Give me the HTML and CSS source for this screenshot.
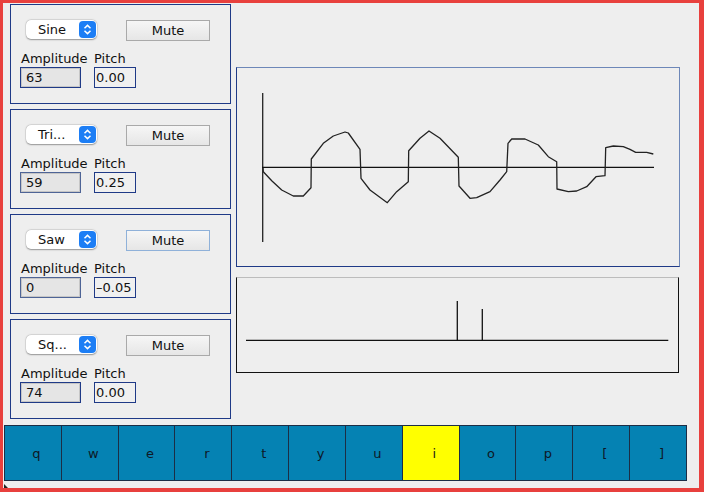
FILE: index.html
```html
<!DOCTYPE html>
<html>
<head>
<meta charset="utf-8">
<link rel="stylesheet" href="styles.css">
</head>
<body>
<div class="frame">
  <div class="main">
    <div class="voices">
      <div class="panel">
        <div class="controls">
          <div class="select"><span class="sel-text">Sine</span><svg class="stepper" width="17" height="17" viewBox="0 0 17 17"><rect rx="4" width="17" height="17" fill="#1d7ef5"/><path d="M5.5 7.2 L8.5 4.4 L11.5 7.2 M5.5 9.8 L8.5 12.6 L11.5 9.8" stroke="#fff" stroke-width="1.5" fill="none"/></svg></div>
          <div class="mute">Mute</div>
        </div>
        <div class="fields">
          <div class="field-col"><div class="lbl">Amplitude</div><div class="input amp">63</div></div>
          <div class="field-col"><div class="lbl">Pitch</div><div class="input pitch">0.00</div></div>
        </div>
      </div>
      <div class="panel">
        <div class="controls">
          <div class="select"><span class="sel-text">Tri...</span><svg class="stepper" width="17" height="17" viewBox="0 0 17 17"><rect rx="4" width="17" height="17" fill="#1d7ef5"/><path d="M5.5 7.2 L8.5 4.4 L11.5 7.2 M5.5 9.8 L8.5 12.6 L11.5 9.8" stroke="#fff" stroke-width="1.5" fill="none"/></svg></div>
          <div class="mute">Mute</div>
        </div>
        <div class="fields">
          <div class="field-col"><div class="lbl">Amplitude</div><div class="input amp soft">59</div></div>
          <div class="field-col"><div class="lbl">Pitch</div><div class="input pitch">0.25</div></div>
        </div>
      </div>
      <div class="panel">
        <div class="controls">
          <div class="select"><span class="sel-text">Saw</span><svg class="stepper" width="17" height="17" viewBox="0 0 17 17"><rect rx="4" width="17" height="17" fill="#1d7ef5"/><path d="M5.5 7.2 L8.5 4.4 L11.5 7.2 M5.5 9.8 L8.5 12.6 L11.5 9.8" stroke="#fff" stroke-width="1.5" fill="none"/></svg></div>
          <div class="mute focus">Mute</div>
        </div>
        <div class="fields">
          <div class="field-col"><div class="lbl">Amplitude</div><div class="input amp soft">0</div></div>
          <div class="field-col"><div class="lbl">Pitch</div><div class="input pitch">&#8211;0.05</div></div>
        </div>
      </div>
      <div class="panel">
        <div class="controls">
          <div class="select"><span class="sel-text">Sq...</span><svg class="stepper" width="17" height="17" viewBox="0 0 17 17"><rect rx="4" width="17" height="17" fill="#1d7ef5"/><path d="M5.5 7.2 L8.5 4.4 L11.5 7.2 M5.5 9.8 L8.5 12.6 L11.5 9.8" stroke="#fff" stroke-width="1.5" fill="none"/></svg></div>
          <div class="mute">Mute</div>
        </div>
        <div class="fields">
          <div class="field-col"><div class="lbl">Amplitude</div><div class="input amp">74</div></div>
          <div class="field-col"><div class="lbl">Pitch</div><div class="input pitch">0.00</div></div>
        </div>
      </div>
    </div>
    <div class="graphs">
      <div class="wave">
        <svg width="442" height="198" viewBox="237 68 442 198">
          <line x1="262.7" y1="93" x2="262.7" y2="242" stroke="#222" stroke-width="1.3"/>
          <line x1="262" y1="167.3" x2="654" y2="167.3" stroke="#111" stroke-width="1.3"/>
          <polyline fill="none" stroke="#222" stroke-width="1.3" stroke-linejoin="round" points="263,168 263.3,171.7 272,181 281.7,190 293.3,196 303.3,196 311,187.7 311.3,159 323.3,143.3 333.3,136 345,132 348.3,133 360,149.3 361,178.3 370,190 387.3,202.7 396.7,191.7 408.3,181.7 408.7,150.7 420,138.3 429,131 440,138.3 458.3,157.3 459,186 470,198.3 476.7,197.7 490,191.7 500,180 506.7,171.7 508,143.3 511.7,139 525,139 538.3,145 548.3,156.7 556.7,161.7 557,189 568.3,191.7 576.7,191 586.7,186.7 596,176.7 605,175.7 605.7,147.7 613.3,146 623.3,146.7 630,149.3 635.7,152.3 646.7,152.3 653.3,154"/>
        </svg>
      </div>
      <div class="spectrum">
        <svg width="441" height="94" viewBox="237 278 441 94">
          <line x1="246" y1="340.3" x2="668.3" y2="340.3" stroke="#111" stroke-width="1.3"/>
          <line x1="457.3" y1="301" x2="457.3" y2="340.3" stroke="#111" stroke-width="1.3"/>
          <line x1="482.3" y1="309" x2="482.3" y2="340.3" stroke="#111" stroke-width="1.3"/>
        </svg>
      </div>
    </div>
  </div>
  <div class="keyboard">
    <div class="key">q</div>
    <div class="key">w</div>
    <div class="key">e</div>
    <div class="key">r</div>
    <div class="key">t</div>
    <div class="key">y</div>
    <div class="key">u</div>
    <div class="key on">i</div>
    <div class="key">o</div>
    <div class="key">p</div>
    <div class="key">[</div>
    <div class="key">]</div>
  </div>
  <div class="strip"><span class="grip"></span></div>
</div>
</body>
</html>
```

FILE: styles.css
```css
html, body {
  margin: 0;
  padding: 0;
  background: #eeeeee;
}

.frame {
  width: 704px;
  height: 492px;
  box-sizing: border-box;
  border-style: solid;
  border-color: #e8403d;
  border-width: 3px 5px 4px 3px;
  background: #eeeeee;
  font-family: "DejaVu Sans", sans-serif;
  font-size: 13px;
  color: #111;
  display: flex;
  flex-direction: column;
}

.main {
  display: flex;
  padding-top: 1px;
}

.voices {
  margin-left: 7px;
  width: 221px;
  display: flex;
  flex-direction: column;
  gap: 5px;
}

.panel {
  height: 100px;
  box-sizing: border-box;
  border: 1px solid #1f3a87;
  padding: 15px 0 0 9px;
}

.controls {
  display: flex;
  align-items: flex-start;
  height: 21px;
}

.select {
  margin-left: 6px;
  width: 71px;
  height: 19px;
  box-sizing: border-box;
  background: #fff;
  border-radius: 5px;
  box-shadow: 0 0.5px 1.5px rgba(0,0,0,0.35), 0 0 0 0.5px rgba(0,0,0,0.08);
  display: flex;
  align-items: center;
  justify-content: space-between;
  padding: 0 1px 0 12px;
}

.sel-text {
  line-height: 19px;
}

.stepper {
  display: block;
}

.mute {
  margin-left: 29px;
  width: 84px;
  height: 21px;
  box-sizing: border-box;
  border: 1px solid #a9a9a9;
  background: linear-gradient(#f6f6f6, #e6e6e6);
  text-align: center;
  line-height: 19px;
}

.mute.focus {
  border-color: #8fb1d9;
}

.fields {
  display: flex;
  margin-top: 10px;
}

.field-col {
  display: flex;
  flex-direction: column;
}

.field-col:first-child {
  width: 73px;
  margin-left: 1px;
}

.lbl {
  line-height: 15px;
  height: 16px;
}

.input {
  height: 21px;
  box-sizing: border-box;
  border: 1px solid #1f3a87;
  padding-left: 5px;
  line-height: 19px;
}

.amp {
  width: 61px;
  margin-left: -1px;
  background: #e5e5e5;
  box-shadow: inset 0 0 0 1px #c6c6c6;
}

.amp.soft {
  border-color: #4e6496;
}

.pitch {
  width: 42px;
  padding-left: 1px;
  background: #f0f0f0;
}

.graphs {
  margin-left: 5px;
  margin-top: 63px;
  display: flex;
  flex-direction: column;
  gap: 10px;
}

.wave {
  width: 444px;
  height: 200px;
  box-sizing: border-box;
  border: 1px solid #1f3a87;
  border-top-color: #6d87b8;
  border-right-color: #6d87b8;
}

.wave svg, .spectrum svg {
  display: block;
}

.spectrum {
  width: 443px;
  height: 96px;
  box-sizing: border-box;
  border: 1px solid #111;
  border-top-color: #bcbcbc;
}

.keyboard {
  margin-top: 6px;
  margin-left: 1px;
  width: 683px;
  height: 56px;
  box-sizing: border-box;
  display: flex;
  border: 1px solid #1c2d45;
  border-right: none;
}

.key {
  flex: 1;
  box-sizing: border-box;
  border-right: 1px solid #1c2d45;
  background: #0582b3;
  color: #0e1826;
  display: flex;
  align-items: center;
  justify-content: center;
  padding-left: 7px;
  padding-top: 1px;
}

.key.on {
  background: #ffff00;
  color: #1a1a1a;
}

.strip {
  flex: 1;
  position: relative;
}

.grip {
  position: absolute;
  left: 1px;
  bottom: 0;
  width: 0;
  height: 0;
  border-left: 4px solid #222;
  border-top: 4px solid transparent;
}
```
